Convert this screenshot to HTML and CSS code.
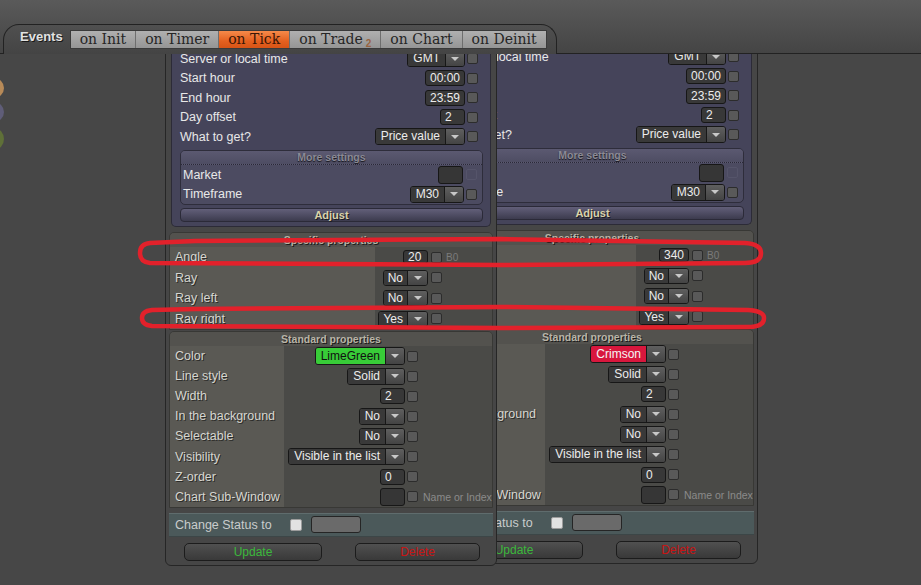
FILE: index.html
```html
<!DOCTYPE html>
<html lang="en">
<head>
    <meta charset="UTF-8">
    <title>Events</title>
    <link rel="stylesheet" href="styles.css">
</head>
<body>
<div class="desk">

    <header class="topbar">
        <div class="stub"></div>
        <div class="tabframe">
            <span class="events">Events</span>
            <nav class="tabs">
                <span class="tab">on Init</span>
                <span class="tab">on Timer</span>
                <span class="tab active">on Tick</span>
                <span class="tab">on Trade<span class="badge">2</span></span>
                <span class="tab">on Chart</span>
                <span class="tab">on Deinit</span>
            </nav>
        </div>
        <div class="fill"></div>
    </header>

    <span class="dot dot-o"></span>
    <span class="dot dot-p"></span>
    <span class="dot dot-g"></span>

    <!-- second object, behind -->
    <div class="panel panel-b">
        <div class="main">
            <div class="row"><span class="lbl">Server or local time</span><span class="combo"><span class="txt">GMT</span><span class="arr"></span></span><span class="chk"></span></div>
            <div class="row"><span class="lbl">Start hour</span><span class="field">00:00</span><span class="chk"></span></div>
            <div class="row"><span class="lbl">End hour</span><span class="field">23:59</span><span class="chk"></span></div>
            <div class="row"><span class="lbl">Day offset</span><span class="field">2</span><span class="chk"></span></div>
            <div class="row"><span class="lbl">What to get?</span><span class="combo"><span class="txt">Price value</span><span class="arr"></span></span><span class="chk"></span></div>
            <div class="group">
                <div class="group-head">More settings</div>
                <div class="row row-m"><span class="lbl">Market</span><span class="field blank"></span><span class="chk off"></span></div>
                <div class="row"><span class="lbl">Timeframe</span><span class="combo"><span class="txt">M30</span><span class="arr"></span></span><span class="chk"></span></div>
            </div>
            <div class="adjust">Adjust</div>
        </div>

        <div class="sect spec">
            <div class="sect-head">Specific properties</div>
            <div class="prow"><span class="plbl">Angle</span><span class="pval"><span class="field small">340</span></span><span class="chk"></span><span class="note">B0</span></div>
            <div class="prow"><span class="plbl">Ray</span><span class="pval"><span class="combo small"><span class="txt">No</span><span class="arr"></span></span></span><span class="chk"></span><span class="note"></span></div>
            <div class="prow"><span class="plbl">Ray left</span><span class="pval"><span class="combo small"><span class="txt">No</span><span class="arr"></span></span></span><span class="chk"></span><span class="note"></span></div>
            <div class="prow"><span class="plbl">Ray right</span><span class="pval"><span class="combo small"><span class="txt">Yes</span><span class="arr"></span></span></span><span class="chk"></span><span class="note"></span></div>
        </div>

        <div class="sect std">
            <div class="sect-head">Standard properties</div>
            <div class="prow"><span class="plbl">Color</span><span class="pval"><span class="combo tall"><span class="txt crimson">Crimson</span><span class="arr"></span></span></span><span class="chk"></span><span class="note"></span></div>
            <div class="prow"><span class="plbl">Line style</span><span class="pval"><span class="combo"><span class="txt">Solid</span><span class="arr"></span></span></span><span class="chk"></span><span class="note"></span></div>
            <div class="prow"><span class="plbl">Width</span><span class="pval"><span class="field">2</span></span><span class="chk"></span><span class="note"></span></div>
            <div class="prow"><span class="plbl">In the background</span><span class="pval"><span class="combo"><span class="txt">No</span><span class="arr"></span></span></span><span class="chk"></span><span class="note"></span></div>
            <div class="prow"><span class="plbl">Selectable</span><span class="pval"><span class="combo"><span class="txt">No</span><span class="arr"></span></span></span><span class="chk"></span><span class="note"></span></div>
            <div class="prow"><span class="plbl">Visibility</span><span class="pval"><span class="combo"><span class="txt">Visible in the list</span><span class="arr"></span></span></span><span class="chk"></span><span class="note"></span></div>
            <div class="prow"><span class="plbl">Z-order</span><span class="pval"><span class="field">0</span></span><span class="chk"></span><span class="note"></span></div>
            <div class="prow"><span class="plbl">Chart Sub-Window</span><span class="pval"><span class="field blank"></span></span><span class="chk"></span><span class="note">Name or Index</span></div>
        </div>

        <div class="status">Change Status to <span class="chk white"></span><span class="sbox"></span></div>
        <div class="btns"><span class="btn upd">Update</span><span class="btn del">Delete</span></div>
    </div>

    <!-- first object, in front -->
    <div class="panel panel-a">
        <div class="main">
            <div class="row"><span class="lbl">Server or local time</span><span class="combo"><span class="txt">GMT</span><span class="arr"></span></span><span class="chk"></span></div>
            <div class="row"><span class="lbl">Start hour</span><span class="field">00:00</span><span class="chk"></span></div>
            <div class="row"><span class="lbl">End hour</span><span class="field">23:59</span><span class="chk"></span></div>
            <div class="row"><span class="lbl">Day offset</span><span class="field">2</span><span class="chk"></span></div>
            <div class="row"><span class="lbl">What to get?</span><span class="combo"><span class="txt">Price value</span><span class="arr"></span></span><span class="chk"></span></div>
            <div class="group">
                <div class="group-head">More settings</div>
                <div class="row row-m"><span class="lbl">Market</span><span class="field blank"></span><span class="chk off"></span></div>
                <div class="row"><span class="lbl">Timeframe</span><span class="combo"><span class="txt">M30</span><span class="arr"></span></span><span class="chk"></span></div>
            </div>
            <div class="adjust">Adjust</div>
        </div>

        <div class="sect spec">
            <div class="sect-head">Specific properties</div>
            <div class="prow"><span class="plbl">Angle</span><span class="pval"><span class="field small">20</span></span><span class="chk"></span><span class="note">B0</span></div>
            <div class="prow"><span class="plbl">Ray</span><span class="pval"><span class="combo small"><span class="txt">No</span><span class="arr"></span></span></span><span class="chk"></span><span class="note"></span></div>
            <div class="prow"><span class="plbl">Ray left</span><span class="pval"><span class="combo small"><span class="txt">No</span><span class="arr"></span></span></span><span class="chk"></span><span class="note"></span></div>
            <div class="prow"><span class="plbl">Ray right</span><span class="pval"><span class="combo small"><span class="txt">Yes</span><span class="arr"></span></span></span><span class="chk"></span><span class="note"></span></div>
        </div>

        <div class="sect std">
            <div class="sect-head">Standard properties</div>
            <div class="prow"><span class="plbl">Color</span><span class="pval"><span class="combo tall"><span class="txt lime">LimeGreen</span><span class="arr"></span></span></span><span class="chk"></span><span class="note"></span></div>
            <div class="prow"><span class="plbl">Line style</span><span class="pval"><span class="combo"><span class="txt">Solid</span><span class="arr"></span></span></span><span class="chk"></span><span class="note"></span></div>
            <div class="prow"><span class="plbl">Width</span><span class="pval"><span class="field">2</span></span><span class="chk"></span><span class="note"></span></div>
            <div class="prow"><span class="plbl">In the background</span><span class="pval"><span class="combo"><span class="txt">No</span><span class="arr"></span></span></span><span class="chk"></span><span class="note"></span></div>
            <div class="prow"><span class="plbl">Selectable</span><span class="pval"><span class="combo"><span class="txt">No</span><span class="arr"></span></span></span><span class="chk"></span><span class="note"></span></div>
            <div class="prow"><span class="plbl">Visibility</span><span class="pval"><span class="combo"><span class="txt">Visible in the list</span><span class="arr"></span></span></span><span class="chk"></span><span class="note"></span></div>
            <div class="prow"><span class="plbl">Z-order</span><span class="pval"><span class="field">0</span></span><span class="chk"></span><span class="note"></span></div>
            <div class="prow"><span class="plbl">Chart Sub-Window</span><span class="pval"><span class="field blank"></span></span><span class="chk"></span><span class="note">Name or Index</span></div>
        </div>

        <div class="status">Change Status to <span class="chk white"></span><span class="sbox"></span></div>
        <div class="btns"><span class="btn upd">Update</span><span class="btn del">Delete</span></div>
    </div>

    <!-- hand drawn marks -->
    <svg class="marks" width="921" height="585" viewBox="0 0 921 585">
        <path d="M150 243 L195 241 L500 239 L745 243 Q761 244 761 253 Q761 263 745 263 L500 265 L150 263 Q140 262 140 253 Q140 244 150 243 Z"/>
        <path d="M152 310 L195 309 L500 307 L748 310 Q764 311 764 318 Q764 327 748 327 L500 328 L152 326 Q142 325 142 318 Q142 311 152 310 Z"/>
    </svg>

</div>
</body>
</html>
```

FILE: styles.css
```css
body {
    margin: 0;
    background-color: #474747;
    font-family: "Liberation Sans", Arial, sans-serif;
    font-size: 12px;
    color: #e6e6e6;
    overflow: hidden;
}
.desk {
    position: relative;
    width: 921px;
    height: 585px;
    overflow: hidden;
}

/* top bar with tabs */
.topbar {
    position: relative;
    z-index: 3;
    height: 54px;
    display: flex;
    align-items: flex-end;
    background: linear-gradient(#5a5a5a, #444);
}
.topbar .stub {
    width: 3px;
    border-bottom: 1px solid #222;
}
.topbar .fill {
    flex: 1;
    border-bottom: 1px solid #222;
}
.tabframe {
    width: 554px;
    height: 30px;
    box-sizing: border-box;
    border: 1px solid #222;
    border-bottom: none;
    border-radius: 16px 16px 0 0;
    display: flex;
    align-items: flex-start;
    padding-top: 5px;
}
.events {
    margin: -1px 7px 0 16px;
    font-weight: bold;
    font-size: 13px;
    line-height: 16px;
    color: #e2e2e2;
    text-shadow: 1px 1px 0 #181818;
}
.tabs {
    display: flex;
    height: 19px;
    border: 1px solid #3a3a3a;
    box-sizing: border-box;
}
.tab {
    padding: 0 9px;
    font-family: "DejaVu Serif", "Liberation Serif", serif;
    font-size: 14px;
    line-height: 17px;
    color: #262626;
    background: linear-gradient(#b0b0b0, #959595);
    border-left: 1px solid #6e6e6e;
}
.tab:first-child {
    border-left: none;
}
.tab.active {
    background: linear-gradient(#f58a4a, #e4601f 60%, #d75416);
    color: #3a1606;
}
.tab .badge {
    font-family: "Liberation Sans", Arial, sans-serif;
    font-size: 10px;
    font-weight: bold;
    color: #9a6440;
    margin-left: 3px;
    vertical-align: -3px;
}

/* bits of other objects at the left edge */
.dot {
    position: absolute;
    left: -16px;
    width: 20px;
    height: 20px;
    border-radius: 50%;
}
.dot-o { top: 78px; background-color: #b78a58; }
.dot-p { top: 102px; background-color: #5f5d78; }
.dot-g { top: 128px; height: 22px; background-color: #5f7038; }

/* property windows */
.panel {
    position: absolute;
    top: 38px;
    width: 332px;
    box-sizing: border-box;
    border: 1px solid #262626;
    border-radius: 0 0 6px 6px;
    background-color: #464646;
    padding: 0 3px 4px;
}
.panel-a {
    left: 165px;
    z-index: 2;
}
.panel-b {
    left: 426px;
    top: 36px;
    z-index: 1;
}

.main {
    margin: 0 2px;
    background-color: #45445a;
    border: 1px solid #2c2b37;
    border-top: none;
    border-radius: 0 0 5px 5px;
    padding: 10px 7px 4px 8px;
}
.row {
    display: flex;
    align-items: center;
    height: 19.5px;
    padding-right: 5px;
}
.row .lbl {
    flex: 1;
    font-size: 12.5px;
    color: #e8e8e8;
    white-space: nowrap;
}
.group {
    margin-top: 3px;
    border: 1px solid #2e2d3b;
    border-radius: 5px;
    background-color: #4c4b61;
}
.group .row {
    padding: 0 5px 0 2px;
}
.group .row-m {
    height: 20px;
}
.group-head {
    height: 13px;
    line-height: 13px;
    text-align: center;
    font-weight: bold;
    font-size: 10.5px;
    color: #8b8a95;
    text-shadow: 0 1px 1px #15141c;
    border-bottom: 1px dotted #2a2937;
    background: linear-gradient(#5b5971, #4e4d63);
    border-radius: 4px 4px 0 0;
}
.adjust {
    margin-top: 3px;
    height: 14px;
    box-sizing: border-box;
    border: 1px solid #2b2a38;
    border-radius: 4px;
    background: linear-gradient(#625f79, #3c3b4e);
    text-align: center;
    font-weight: bold;
    font-size: 11px;
    line-height: 12px;
    color: #d9d3ab;
    text-shadow: 1px 1px 0 #1b1a22;
}

.sect {
    border: 1px solid #383835;
    border-radius: 5px 5px 0 0;
    background-color: #4a4a47;
}
.spec {
    margin-top: 5px;
}
.std {
    margin-top: 1px;
}
.sect-head {
    height: 14px;
    line-height: 14px;
    text-align: center;
    font-weight: bold;
    font-size: 10.5px;
    color: #b8b4a7;
    text-shadow: 1px 1px 0 #1c1c1c;
    background-color: #53524e;
    border-radius: 4px 4px 0 0;
}
.prow {
    display: flex;
    align-items: center;
    height: 20.5px;
}
.std .prow {
    height: 20.1px;
}
.plbl {
    align-self: stretch;
    display: flex;
    align-items: center;
    width: 205px;
    box-sizing: border-box;
    padding-left: 5px;
    background-color: #5a5954;
    font-size: 12.5px;
    color: #d6d6d0;
    text-shadow: 1px 1px 0 #2c2c2a;
    white-space: nowrap;
}
.std .plbl {
    width: 114px;
}
.pval {
    flex: 1;
    display: flex;
    justify-content: flex-end;
}
.note {
    width: 50px;
    box-sizing: border-box;
    padding-left: 4px;
    font-size: 10px;
    color: #7b7b7b;
    white-space: nowrap;
}
.std .note {
    width: 74px;
    padding-left: 5px;
    font-size: 10.5px;
    color: #8a8a8a;
}

/* controls */
.chk {
    flex: none;
    width: 11px;
    height: 11px;
    box-sizing: border-box;
    border: 1px solid #2c2c2c;
    border-radius: 2px;
    background-color: #595959;
    margin-left: 2px;
}
.spec .chk {
    margin-left: 3px;
}
.chk.off {
    background-color: transparent;
    border-color: #55546a;
    margin-left: 3px;
}
.field {
    min-width: 25px;
    height: 16px;
    box-sizing: border-box;
    border: 1px solid #171717;
    border-radius: 3px;
    background-color: #383838;
    padding: 0 4px;
    line-height: 14px;
    color: #ececec;
}
.field.small {
    height: 14px;
    line-height: 12px;
}
.field.blank {
    width: 25px;
    height: 18px;
    background-color: #363636;
}
.combo {
    display: flex;
    height: 17px;
    box-sizing: border-box;
    border: 1px solid #171717;
    border-radius: 3px;
    overflow: hidden;
}
.combo.small {
    height: 16px;
}
.combo.tall {
    height: 18px;
}
.combo .txt {
    padding: 0 5px;
    line-height: 15px;
    background-color: #393939;
    color: #ececec;
    white-space: nowrap;
}
.combo.small .txt {
    padding: 0 4px;
    line-height: 14px;
}
.combo.tall .txt {
    line-height: 16px;
}
.combo .txt.lime {
    background-color: #38cc38;
    color: #111;
}
.combo .txt.crimson {
    background-color: #d8173d;
    color: #f5f5f5;
}
.combo .arr {
    width: 18px;
    display: flex;
    align-items: center;
    justify-content: center;
    background: linear-gradient(#5f5f5f, #444);
    border-left: 1px solid #171717;
}
.combo.small .arr {
    width: 19px;
}
.combo .arr::after {
    content: "";
    border-left: 4px solid transparent;
    border-right: 4px solid transparent;
    border-top: 4px solid #c8c8c8;
}

.status {
    margin-top: 5px;
    height: 24px;
    box-sizing: border-box;
    border-top: 1px solid #5f6c6d;
    border-bottom: 1px solid #3c4647;
    background-color: #4b595a;
    display: flex;
    align-items: center;
    padding-left: 6px;
    font-size: 12.5px;
    color: #c9cccc;
    white-space: nowrap;
}
.status .chk.white {
    width: 12px;
    height: 12px;
    margin-left: 18px;
    background-color: #e2e2e2;
    border-color: #9c9c9c;
}
.sbox {
    width: 50px;
    height: 17px;
    box-sizing: border-box;
    margin-left: 9px;
    border: 1px solid #252525;
    border-radius: 3px;
    background-color: #6a6a6a;
}

.btns {
    display: flex;
    margin-top: 6px;
}
.btn {
    height: 18px;
    box-sizing: border-box;
    border: 1px solid #1c1c1c;
    border-radius: 5px;
    background: linear-gradient(#505050, #393939);
    text-align: center;
    line-height: 16px;
}
.btn.upd {
    margin-left: 15px;
    width: 138px;
    color: #3cb83c;
}
.btn.del {
    margin-left: 33px;
    width: 125px;
    color: #c81515;
}

.marks {
    position: absolute;
    left: 0;
    top: 0;
    z-index: 5;
    pointer-events: none;
}
.marks path {
    fill: none;
    stroke: #e2212b;
    stroke-width: 4.5;
    stroke-linejoin: round;
}
```
